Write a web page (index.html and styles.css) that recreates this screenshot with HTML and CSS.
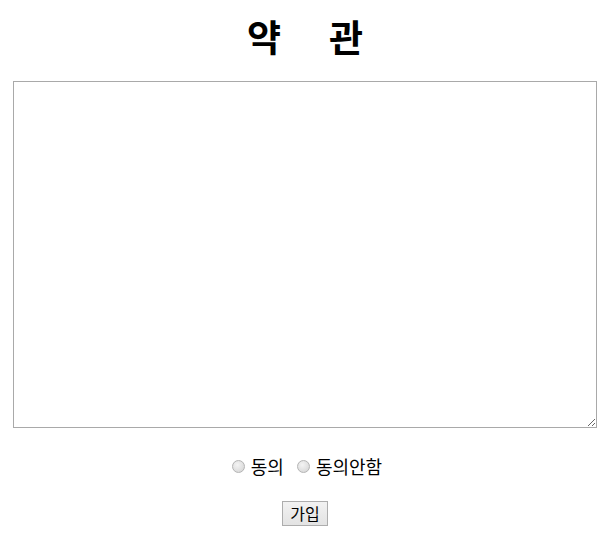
FILE: index.html
```html
<!DOCTYPE html>
<html lang="ko">
<head>
<meta charset="utf-8">
<link rel="stylesheet" href="styles.css">
</head>
<body>
<div class="page">
  <h1 class="title"><span>약</span><span>관</span></h1>
  <textarea class="terms"></textarea>
  <div class="choices">
    <label class="choice"><input type="radio" name="agree" class="radio"><span>동의</span></label>
    <label class="choice"><input type="radio" name="agree" class="radio"><span>동의안함</span></label>
  </div>
  <div class="actions">
    <button class="join" type="button">가입</button>
  </div>
</div>
</body>
</html>
```
FILE: styles.css
```css
html, body {
  margin: 0;
  padding: 0;
  background: #fff;
}
.page {
  padding: 14px 12px 0 13px;
  font-family: "Noto Sans CJK KR", "Noto Sans", sans-serif;
  color: #000;
}
.title {
  margin: 0;
  display: flex;
  justify-content: center;
  gap: 48px;
  font-size: 37px;
  font-weight: 700;
  line-height: 44px;
  height: 44px;
}
.terms {
  display: block;
  box-sizing: border-box;
  width: 584px;
  height: 347px;
  margin-top: 23px;
  border: 1px solid #a9a9a9;
  resize: both;
  padding: 2px;
}
.choices {
  margin-top: 26px;
  display: flex;
  justify-content: center;
  gap: 13px;
  font-size: 18px;
  line-height: 24px;
  padding-left: 4px;
}
.choice {
  display: flex;
  align-items: center;
  gap: 6px;
}
.radio {
  appearance: none;
  -webkit-appearance: none;
  margin: 0;
  width: 13px;
  height: 13px;
  border-radius: 50%;
  border: 1px solid #b4b4b4;
  background: radial-gradient(circle at 40% 35%, #f4f4f4, #d2d2d2);
  box-sizing: border-box;
}
.actions {
  margin-top: 23px;
  display: flex;
  justify-content: center;
}
.join {
  font-family: "Noto Sans CJK KR", sans-serif;
  font-size: 16px;
  line-height: 21px;
  height: 25px;
  width: 46px;
  padding: 0;
  border: 1px solid #adadad;
  border-radius: 0;
  background: linear-gradient(#f2f2f2, #e3e3e3);
  color: #000;
}
```
